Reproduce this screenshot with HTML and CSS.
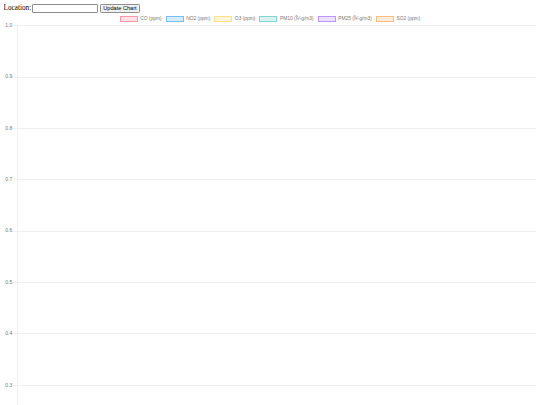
FILE: index.html
```html
<!DOCTYPE html>
<html lang="en">
<head>
  <meta charset="UTF-8">
  <meta name="viewport" content="width=device-width, initial-scale=1.0">
  <title>Air Quality Chart</title>
  <link rel="stylesheet" href="styles.css">
</head>
<body>
  <div class="controls">
    <label for="location">Location:</label>
    <input type="text" id="location" class="input-field">
    <button class="btn" id="update">Update Chart</button>
  </div>

  <div class="chart">
    <ul class="legend">
      <li><span class="swatch co"></span>CO (ppm)</li>
      <li><span class="swatch no2"></span>NO2 (ppm)</li>
      <li><span class="swatch o3"></span>O3 (ppm)</li>
      <li><span class="swatch pm10"></span>PM10 (Î¼g/m3)</li>
      <li><span class="swatch pm25"></span>PM25 (Î¼g/m3)</li>
      <li><span class="swatch so2"></span>SO2 (ppm)</li>
    </ul>

    <div class="plot">
      <div class="row"><span class="tick-label">1.0</span><span class="tick"></span><div class="area"></div></div>
      <div class="row"><span class="tick-label">0.9</span><span class="tick"></span><div class="area"></div></div>
      <div class="row"><span class="tick-label">0.8</span><span class="tick"></span><div class="area"></div></div>
      <div class="row"><span class="tick-label">0.7</span><span class="tick"></span><div class="area"></div></div>
      <div class="row"><span class="tick-label">0.6</span><span class="tick"></span><div class="area"></div></div>
      <div class="row"><span class="tick-label">0.5</span><span class="tick"></span><div class="area"></div></div>
      <div class="row"><span class="tick-label">0.4</span><span class="tick"></span><div class="area"></div></div>
      <div class="row last"><span class="tick-label">0.3</span><span class="tick"></span><div class="area"></div></div>
    </div>
  </div>
</body>
</html>
```

FILE: styles.css
```css
body {
  margin: 3.6px;
  font-family: "Liberation Serif", "Times New Roman", serif;
  font-size: 7.2px;
  color: #000;
  background-color: #fff;
  overflow: hidden;
}
.controls {
  display: flex;
  align-items: center;
  gap: 1.2px;
  height: 9.5px;
}
.input-field {
  box-sizing: border-box;
  width: 66px;
  height: 9.5px;
  padding: 0 1px;
  border: 1px solid #8f8f8f;
  border-radius: 1px;
  font-size: 6px;
}
.btn {
  box-sizing: border-box;
  height: 9.5px;
  padding: 0 2.8px;
  border: 1px solid #8f8f8f;
  border-radius: 1.3px;
  background-color: #efefef;
  font-family: "Liberation Sans", Arial, sans-serif;
  font-size: 5.6px;
  line-height: 1;
  color: #000;
}

/* legend above the plot */
.legend {
  display: flex;
  justify-content: center;
  gap: 4px;
  margin: 2.8px 0 0;
  padding: 0;
  list-style: none;
  font-family: "Liberation Sans", Helvetica, Arial, sans-serif;
  font-size: 4.9px;
  color: #777;
}
.legend li {
  display: flex;
  align-items: center;
  gap: 2.5px;
}
.swatch {
  box-sizing: border-box;
  width: 18px;
  height: 5.8px;
  border: 1px solid;
}
.co   { background-color: rgba(255, 99, 132, 0.2);  border-color: rgba(255, 99, 132, 0.6); }
.no2  { background-color: rgba(54, 162, 235, 0.2);  border-color: rgba(54, 162, 235, 0.6); }
.o3   { background-color: rgba(255, 206, 86, 0.2);  border-color: rgba(255, 206, 86, 0.6); }
.pm10 { background-color: rgba(75, 192, 192, 0.2);  border-color: rgba(75, 192, 192, 0.6); }
.pm25 { background-color: rgba(153, 102, 255, 0.2); border-color: rgba(153, 102, 255, 0.6); }
.so2  { background-color: rgba(255, 159, 64, 0.2);  border-color: rgba(255, 159, 64, 0.6); }

/* y axis + grid */
.plot {
  margin-top: 3.6px;
}
.row {
  display: flex;
  height: 51.35px;
}
.row.last {
  height: 24px;
}
.tick-label {
  width: 8.6px;
  padding-right: 0.8px;
  margin-top: -2.2px;
  height: 5.4px;
  line-height: 5.4px;
  text-align: right;
  font-family: "Liberation Sans", Helvetica, Arial, sans-serif;
  font-size: 5px;
  color: #777;
}
.tick {
  width: 4px;
  border-top: 1px solid #eeeeee;
}
.area {
  flex: 1;
  border-top: 1px solid #eeeeee;
  border-left: 1px solid #eeeeee;
}
```
